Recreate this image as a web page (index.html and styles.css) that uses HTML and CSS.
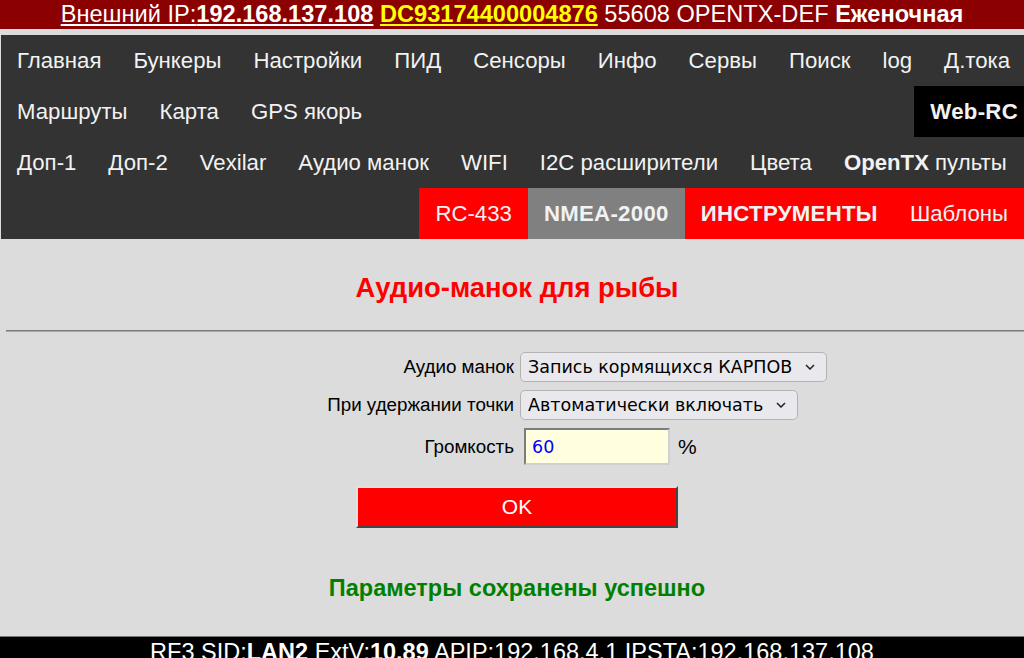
FILE: index.html
```html
<!doctype html>
<html lang="ru">
<head>
    <meta charset="UTF-8">
    <title>Аудио-манок</title>
    <link rel="stylesheet" href="styles.css">
</head>
<body>
<!--верхняя строка-->
<div class="top-bar">
    <a href="#" class="ext-ip">Внешний IP:<b>192.168.137.108</b></a>
    <a href="#" class="dev-id">DC93174400004876</a>
    55608 OPENTX-DEF <b>Еженочная</b>
</div>

<!--меню-->
<div class="nav">
    <div class="nav-row">
        <a href="#">Главная</a>
        <a href="#">Бункеры</a>
        <a href="#">Настройки</a>
        <a href="#">ПИД</a>
        <a href="#">Сенсоры</a>
        <a href="#">Инфо</a>
        <a href="#">Сервы</a>
        <a href="#">Поиск</a>
        <a href="#">log</a>
        <a href="#">Д.тока</a>
    </div>
    <div class="nav-row">
        <a href="#">Маршруты</a>
        <a href="#">Карта</a>
        <a href="#">GPS якорь</a>
        <a href="#" class="push black bold">Web-RC</a>
    </div>
    <div class="nav-row">
        <a href="#">Доп-1</a>
        <a href="#">Доп-2</a>
        <a href="#">Vexilar</a>
        <a href="#">Аудио манок</a>
        <a href="#">WIFI</a>
        <a href="#">I2C расширители</a>
        <a href="#">Цвета</a>
        <a href="#"><b>OpenTX</b> пульты</a>
    </div>
    <div class="nav-row">
        <a href="#" class="push red">RC-433</a>
        <a href="#" class="grey bold">NMEA-2000</a>
        <a href="#" class="red bold">ИНСТРУМЕНТЫ</a>
        <a href="#" class="red">Шаблоны</a>
    </div>
</div>

<div class="content">
    <div class="title">Аудио-манок для рыбы</div>
</div>
<hr>

<form class="content form">
    <label class="lbl">Аудио манок</label>
    <div class="ctl">
        <select>
            <option>Запись кормящихся КАРПОВ</option>
        </select>
    </div>

    <label class="lbl">При удержании точки</label>
    <div class="ctl">
        <select>
            <option>Автоматически включать</option>
        </select>
    </div>

    <label class="lbl">Громкость</label>
    <div class="ctl">
        <input type="text" class="num" value="60"> <span class="pct">%</span>
    </div>

    <div class="btn-row">
        <button type="button" class="ok">OK</button>
    </div>
</form>

<div class="content">
    <div class="saved">Параметры сохранены успешно</div>
</div>

<div class="footer">
    RF3 SID:<b>LAN2</b> ExtV:<b>10.89</b> APIP:192.168.4.1 IPSTA:192.168.137.108
</div>

</body>
</html>
```

FILE: styles.css
```css
*{
    box-sizing: border-box;
}
body{
    margin: 0;
    background: #dcdcdc;
    font-family: "Liberation Sans", Arial, sans-serif;
}

/* верхняя строка */
.top-bar{
    height: 29px;
    line-height: 29px;
    background: #8b0000;
    color: #fff;
    text-align: center;
    font-size: 23.6px;
    white-space: nowrap;
    overflow: hidden;
}
.top-bar a{
    color: #fff;
}
.top-bar .dev-id{
    color: #ffff00;
    font-weight: bold;
}

/* меню */
.nav{
    margin: 6px 0 0 1px;
    background: #333;
}
.nav-row{
    display: flex;
    height: 51px;
}
.nav a{
    display: block;
    padding: 14px 16px;
    color: #f2f2f2;
    text-decoration: none;
    font-size: 22.2px;
    line-height: 23px;
    white-space: nowrap;
}
.nav a.push{
    margin-left: auto;
}
.nav a.bold{
    font-weight: bold;
    letter-spacing: 0.3px;
}
.nav a.black{
    padding-right: 6px;
    background: #000;
}
.nav a.red{
    background: #ff0000;
}
.nav a.grey{
    background: #808080;
}

/* содержимое */
.content{
    padding-left: 10px;
}
.title{
    margin: 34px 0 27px;
    text-align: center;
    color: #ff0000;
    font-size: 27.4px;
    line-height: 30px;
    font-weight: bold;
}
hr{
    margin: 0 0 0 6px;
    border: 0;
    border-top: 1px solid #7a7a7a;
    border-bottom: 1px solid #a8a8a8;
}

.form{
    display: grid;
    grid-template-columns: 1fr 1fr;
    column-gap: 6px;
    row-gap: 8px;
    margin-top: 20px;
    font-size: 18.8px;
}
.lbl{
    display: flex;
    align-items: center;
    justify-content: flex-end;
    color: #000;
}
.ctl{
    display: flex;
    align-items: center;
}
select{
    -webkit-appearance: none;
    appearance: none;
    height: 30px;
    padding: 0 33px 0 7px;
    font-family: "DejaVu Sans", sans-serif;
    font-size: 17.5px;
    color: #000;
    background: #e9e9ed url("data:image/svg+xml,%3Csvg xmlns='http://www.w3.org/2000/svg' width='10' height='6' viewBox='0 0 10 6'%3E%3Cpath d='M1 1l4 4 4-4' fill='none' stroke='%23222' stroke-width='1.5'/%3E%3C/svg%3E") no-repeat right 11px center;
    border: 1px solid #b3b3b3;
    border-radius: 5px;
}
.num{
    width: 146px;
    height: 37px;
    margin-left: 4px;
    padding: 0 6px;
    background: #ffffe0;
    color: #0000ff;
    font-family: "DejaVu Sans", sans-serif;
    font-size: 17.5px;
    border: 2px inset #d0d0d0;
}
.pct{
    margin-left: 8px;
    font-size: 21px;
}
.btn-row{
    grid-column: 1 / 3;
    display: flex;
    justify-content: center;
    margin-top: 13px;
}
.ok{
    width: 322px;
    height: 42px;
    background: #ff0000;
    color: #fff;
    font-family: "Liberation Sans", Arial, sans-serif;
    font-size: 21px;
    border: 2px outset #e0e0e0;
    border-right-color: #9a9a9a;
    border-bottom-color: #9a9a9a;
}

.saved{
    margin: 47px 0 34px;
    text-align: center;
    color: #008000;
    font-size: 23.5px;
    line-height: 27px;
    font-weight: bold;
}

/* нижняя строка */
.footer{
    border-top: 1px solid #777;
    background: #000;
    color: #fff;
    text-align: center;
    font-size: 23.5px;
    line-height: 27px;
    padding: 2px 0 6px;
    white-space: nowrap;
}
```
